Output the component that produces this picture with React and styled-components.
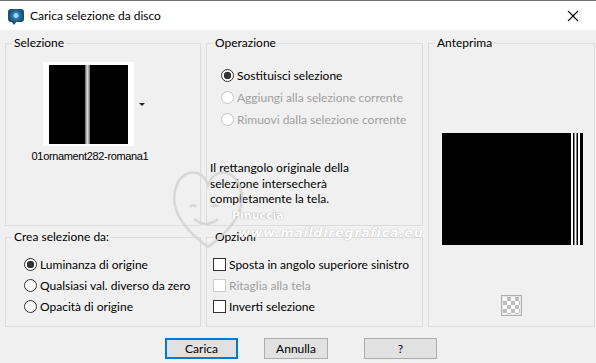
import styled, { createGlobalStyle } from "styled-components";

const GlobalStyle = createGlobalStyle`
    html, body {
        margin: 0;
        padding: 0;
        background: #f0f0f0;
    }
    body {
        font-family: Lato, "Noto Sans", sans-serif;
        font-size: 12px;
        color: #000;
    }
`;

export default function App() {
    return (
        <Window>
            <GlobalStyle />
            <TitleBar>
                <AppIcon />
                <Title>Carica selezione da disco</Title>
                <Close>
                    <svg width="12" height="12" viewBox="0 0 12 12">
                        <path d="M1 1 L11 11 M11 1 L1 11" stroke="#000" strokeWidth="1.1" />
                    </svg>
                </Close>
            </TitleBar>

            <Body>
                <Group $area="sel">
                    <Legend>Selezione</Legend>
                    <ThumbBlock>
                        <ThumbRow>
                            <Thumb>
                                <svg width="79" height="79" viewBox="0 0 79 79">
                                    <rect width="79" height="79" fill="#000" />
                                    <rect x="36" width="5" height="79" fill="#808080" />
                                    <rect x="37.5" width="2" height="79" fill="#d8d8d8" />
                                </svg>
                            </Thumb>
                            <DropArrow />
                        </ThumbRow>
                        <FileName>01ornament282-romana1</FileName>
                    </ThumbBlock>
                </Group>

                <Group $area="op">
                    <Legend>Operazione</Legend>
                    <OptionList $top={16} $left={14} $gap={6}>
                        <Option><Radio $checked />Sostituisci selezione</Option>
                        <Option $disabled><Radio $disabled />Aggiungi alla selezione corrente</Option>
                        <Option $disabled><Radio $disabled />Rimuovi dalla selezione corrente</Option>
                    </OptionList>
                    <Note>
                        Il rettangolo originale della<br />
                        selezione intersecherà<br />
                        completamente la tela.
                    </Note>
                </Group>

                <Group $area="prev">
                    <Legend>Anteprima</Legend>
                    <PreviewArea>
                        <svg width="141" height="112" viewBox="0 0 141 112">
                            <rect width="141" height="112" fill="#000" />
                            <rect x="129" width="2" height="112" fill="#fff" />
                            <rect x="132.5" width="2" height="112" fill="#fff" />
                            <rect x="136" width="2" height="112" fill="#fff" />
                        </svg>
                    </PreviewArea>
                    <CheckerButton />
                </Group>

                <Group $area="crea">
                    <Legend>Crea selezione da:</Legend>
                    <OptionList $top={11} $left={18} $gap={5}>
                        <Option><Radio $checked />Luminanza di origine</Option>
                        <Option><Radio />Qualsiasi val. diverso da zero</Option>
                        <Option><Radio />Opacità di origine</Option>
                    </OptionList>
                </Group>

                <Group $area="opz">
                    <Legend>Opzioni</Legend>
                    <OptionList $top={11} $left={6} $gap={5}>
                        <Option><Check />Sposta in angolo superiore sinistro</Option>
                        <Option $disabled><Check $disabled />Ritaglia alla tela</Option>
                        <Option><Check />Inverti selezione</Option>
                    </OptionList>
                </Group>

                <Watermark>
                    <svg width="80" height="100" viewBox="0 0 80 100">
                        <path d="M40 92 C10 70 2 50 8 32 C14 14 34 12 40 30 C46 12 66 14 72 32 C78 50 70 70 40 92 Z"
                            fill="none" stroke="#d2d2d2" strokeWidth="2.5" />
                        <path d="M22 52 q3 -4 6 0 M44 52 q3 -4 6 0 M26 64 q12 10 24 0"
                            fill="none" stroke="#d2d2d2" strokeWidth="2.5" />
                    </svg>
                    <WmName>Pinuccia</WmName>
                    <WmSite>www.maildiregrafica.eu</WmSite>
                </Watermark>
            </Body>

            <ButtonRow>
                <Button $default>Carica</Button>
                <Button $narrow>Annulla</Button>
                <Button>?</Button>
            </ButtonRow>
        </Window>
    );
}

const Window = styled.div`
    width: 596px;
    height: 363px;
    background: #f0f0f0;
    border-top: 1px solid #6e6e6e;
    box-sizing: border-box;
    overflow: hidden;
`;

const TitleBar = styled.div`
    height: 29px;
    background: #fff;
    display: flex;
    align-items: center;
    padding-left: 8px;
`;

const AppIcon = styled.div`
    width: 16px;
    height: 13px;
    border-radius: 3px;
    background: radial-gradient(circle at 50% 50%, #9ad8f0 0 2px, #2a7fb0 3px, #1b4f78 7px);
    position: relative;
    &::after {
        content: "";
        position: absolute;
        left: 3px;
        bottom: -3px;
        border-left: 3px solid transparent;
        border-right: 3px solid transparent;
        border-top: 4px solid #1b4f78;
    }
`;

const Title = styled.div`
    margin-left: 6px;
    font-size: 12px;
    color: #000;
`;

const Close = styled.div`
    margin-left: auto;
    width: 46px;
    height: 29px;
    display: flex;
    align-items: center;
    justify-content: center;
`;

const Body = styled.div`
    position: relative;
    display: grid;
    grid-template-columns: 196px 217px 167px;
    grid-template-rows: 191px 98px;
    grid-template-areas:
        "sel op prev"
        "crea opz prev";
    column-gap: 5px;
    row-gap: 3px;
    padding: 5px 0 0 5px;
`;

const Group = styled.fieldset`
    grid-area: ${(p) => p.$area};
    margin: 0;
    padding: 0;
    min-width: 0;
    border: 1px solid #dcdcdc;
    position: relative;
`;

const Legend = styled.legend`
    margin-left: 6px;
    padding: 0 2px;
    line-height: 16px;
    font-size: 12px;
`;

const ThumbBlock = styled.div`
    width: 130px;
    margin: 11px 0 0 19px;
    display: flex;
    flex-direction: column;
    align-items: center;
`;

const ThumbRow = styled.div`
    display: flex;
    align-items: center;
    margin-left: 8px;
`;

const Thumb = styled.div`
    width: 91px;
    height: 84px;
    background: #fff;
    display: flex;
    align-items: center;
    justify-content: center;
    svg { display: block; }
`;

const DropArrow = styled.div`
    margin-left: 5px;
    border-left: 3px solid transparent;
    border-right: 3px solid transparent;
    border-top: 3px solid #222;
`;

const FileName = styled.div`
    margin-top: 4px;
    font-family: "Liberation Sans", Arial, sans-serif;
    font-size: 11px;
    letter-spacing: -0.35px;
`;

const OptionList = styled.div`
    display: flex;
    flex-direction: column;
    gap: ${(p) => p.$gap}px;
    margin: ${(p) => p.$top}px 0 0 ${(p) => p.$left}px;
`;

const Option = styled.div`
    display: flex;
    align-items: center;
    height: 16px;
    color: ${(p) => (p.$disabled ? "#a0a0a0" : "#000")};
    white-space: nowrap;
`;

const Radio = styled.span`
    width: 11px;
    height: 11px;
    border-radius: 50%;
    border: 1px solid ${(p) => (p.$disabled ? "#c4c4c4" : "#333")};
    background: ${(p) =>
        p.$checked
            ? "radial-gradient(circle, #333 0 3.5px, #fff 4px)"
            : "#fff"};
    margin-right: 3px;
    flex: none;
`;

const Check = styled.span`
    width: 11px;
    height: 11px;
    border: 1px solid ${(p) => (p.$disabled ? "#cccccc" : "#333")};
    background: #fff;
    margin-right: 3px;
    flex: none;
`;

const Note = styled.div`
    margin: 33px 0 0 3px;
    line-height: 15.5px;
`;

const PreviewArea = styled.div`
    display: flex;
    justify-content: center;
    margin-top: 82px;
    padding-left: 1px;
    svg { display: block; }
`;

const CheckerButton = styled.div`
    width: 19px;
    height: 19px;
    margin: 50px auto 0;
    border: 1px solid #adadad;
    background-color: #fff;
    background-image:
        linear-gradient(45deg, #bcbcbc 25%, transparent 25%, transparent 75%, #bcbcbc 75%),
        linear-gradient(45deg, #bcbcbc 25%, transparent 25%, transparent 75%, #bcbcbc 75%);
    background-size: 8px 8px;
    background-position: 1px 1px, 5px 5px;
    box-shadow: inset 0 0 0 1px #e6e6e6;
`;

const Watermark = styled.div`
    position: absolute;
    left: 168px;
    top: 125px;
    pointer-events: none;
    svg { position: absolute; left: 0; top: 0; opacity: 0.8; }
`;

const WmName = styled.div`
    position: absolute;
    left: 64px;
    top: 54px;
    font-family: "DejaVu Sans", sans-serif;
    font-weight: bold;
    font-size: 11px;
    color: #fff;
    text-shadow: 0 0 1px #a8a8a8, 0 0 1px #a8a8a8;
    white-space: nowrap;
`;

const WmSite = styled.div`
    position: absolute;
    left: 70px;
    top: 70px;
    font-family: "DejaVu Sans", sans-serif;
    font-weight: bold;
    font-style: italic;
    font-size: 13px;
    letter-spacing: 0.5px;
    color: #fff;
    text-shadow: 0 0 1px #b8b8b8, 0 0 1px #b8b8b8;
    white-space: nowrap;
`;

const ButtonRow = styled.div`
    display: flex;
    margin: 11px 0 0 165px;
    gap: 26px;
`;

const Button = styled.button`
    width: ${(p) => (p.$narrow ? "64px" : "73px")};
    margin-right: ${(p) => (p.$narrow ? "10px" : "0")};
    height: 21px;
    box-sizing: border-box;
    font-family: Lato, "Noto Sans", sans-serif;
    font-size: 12px;
    padding: 0;
    color: #000;
    background: #e1e1e1;
    border: ${(p) => (p.$default ? "2px solid #0078d7" : "1px solid #adadad")};
`;
